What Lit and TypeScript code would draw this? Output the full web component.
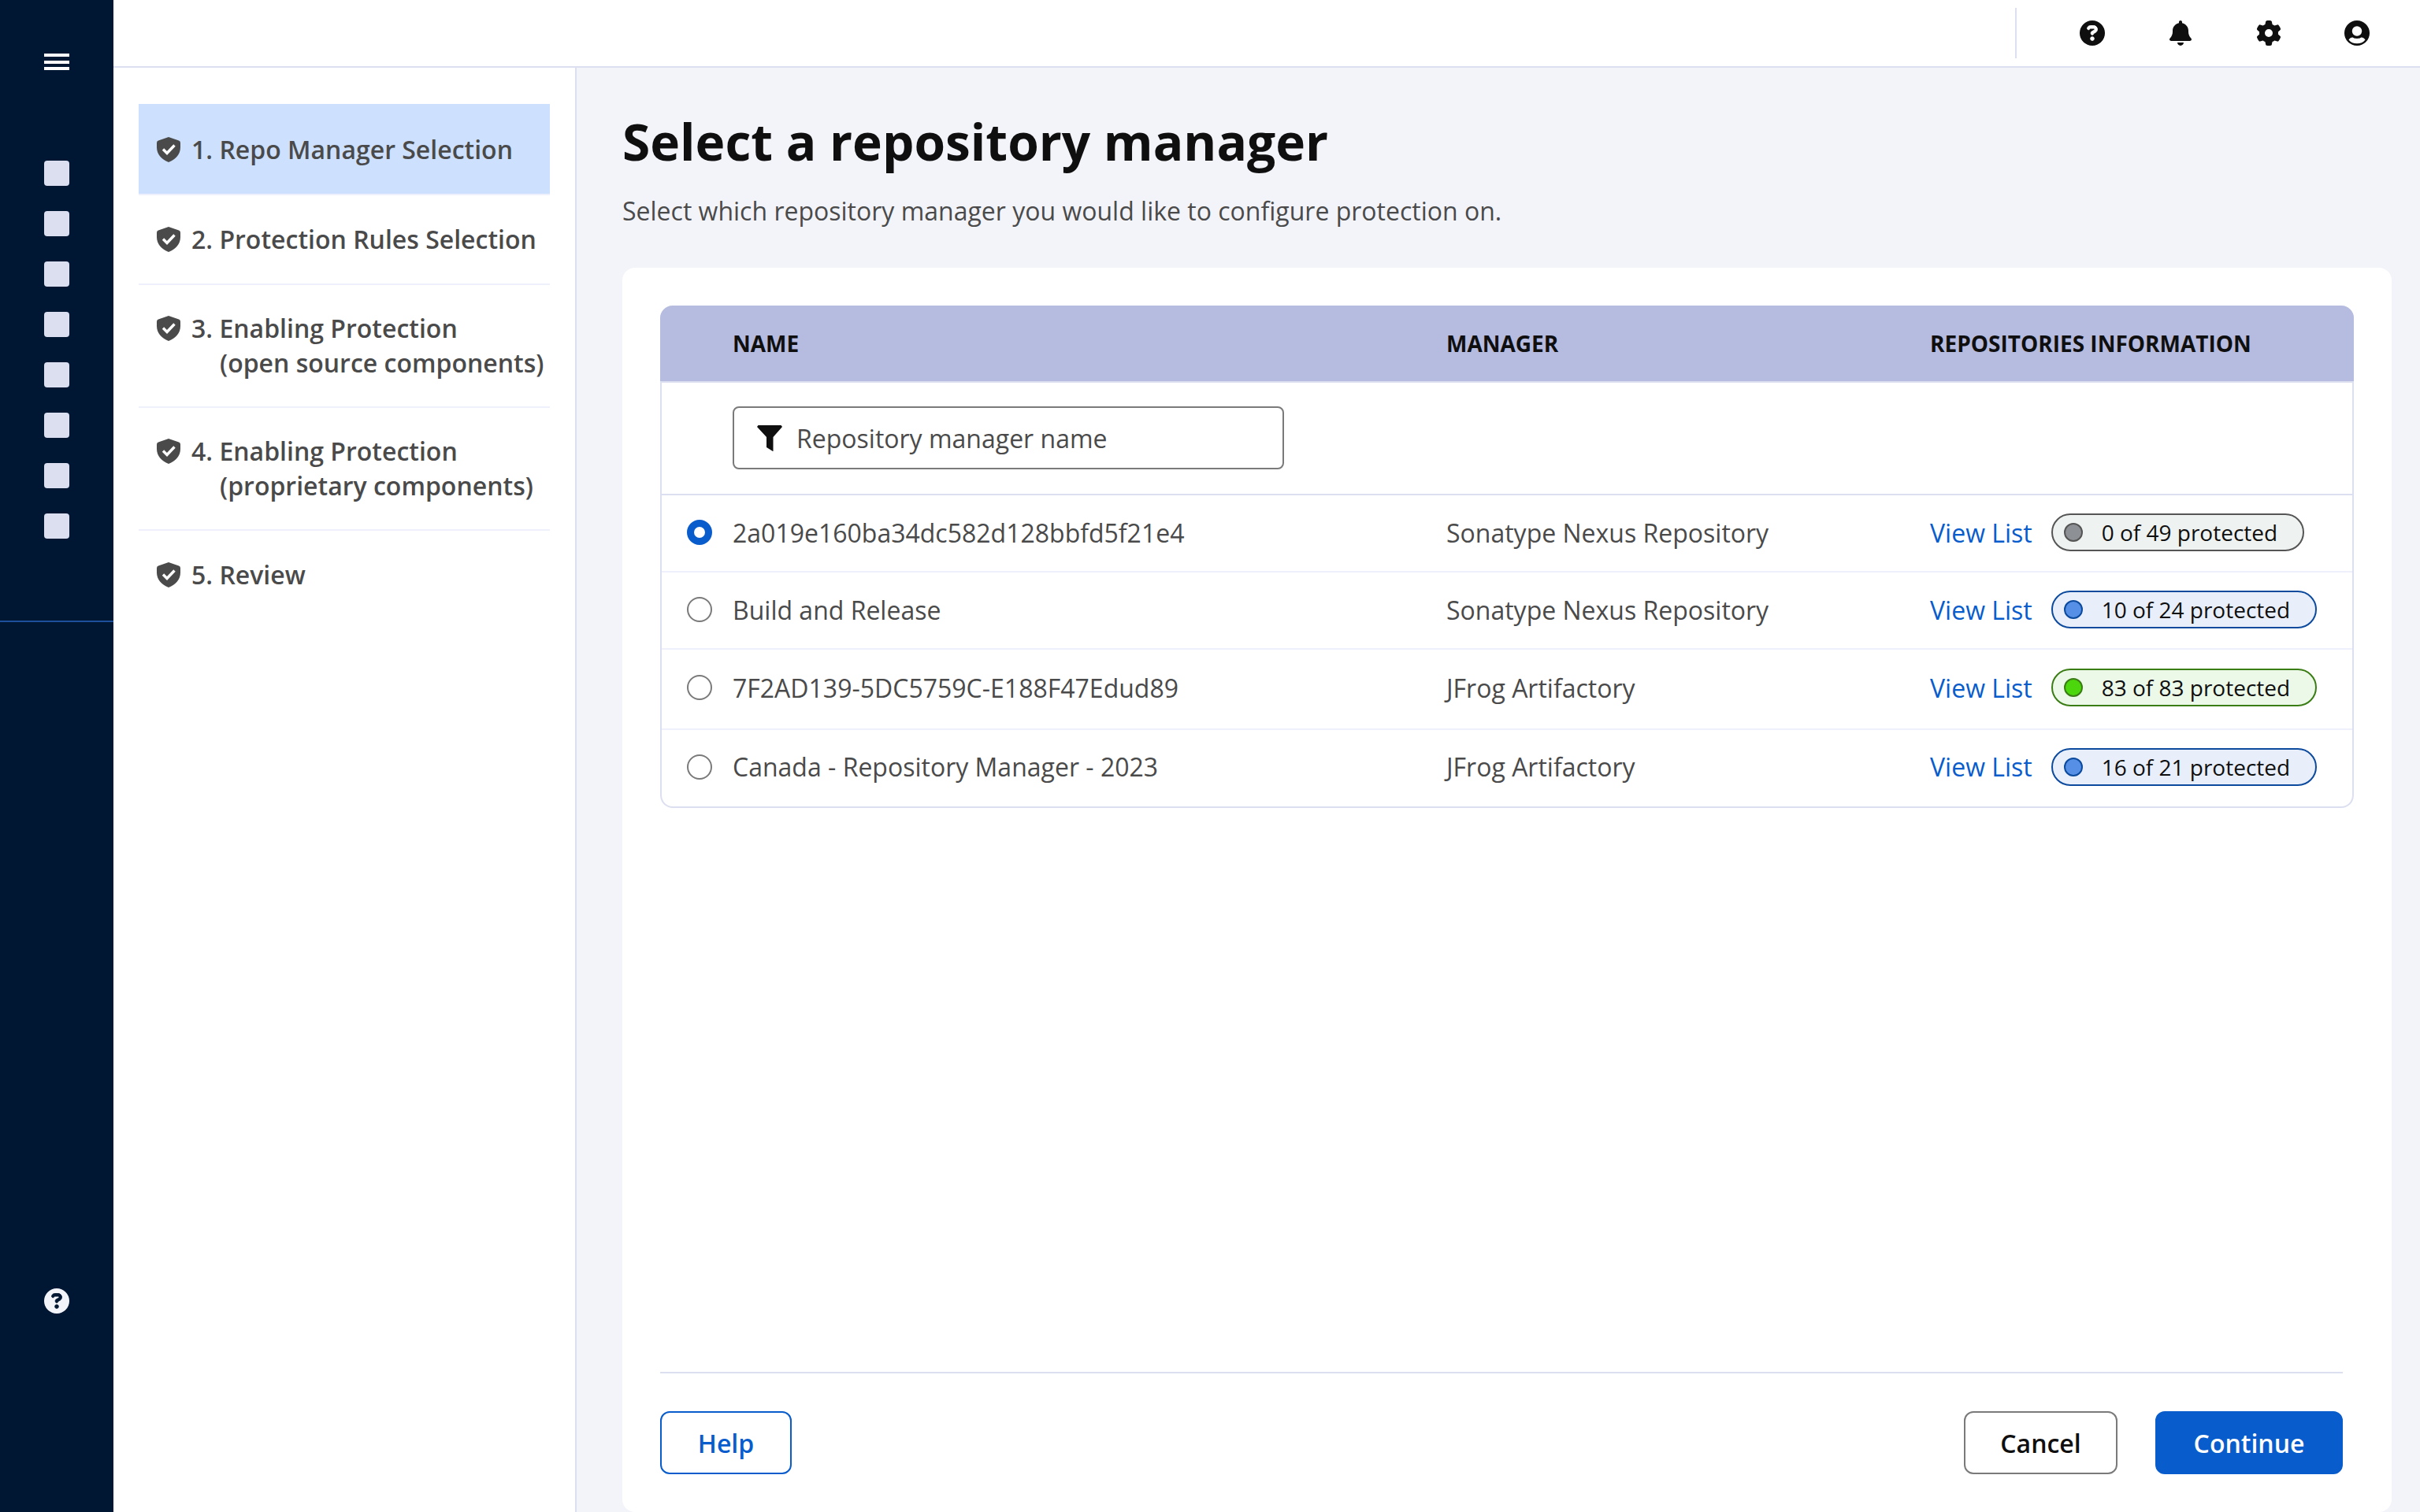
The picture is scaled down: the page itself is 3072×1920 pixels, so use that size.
import { css, html, LitElement, svg } from "lit";
import { customElement, state } from "lit/decorators.js";
import { classMap } from "lit/directives/class-map.js";

const helpIcon = html`<svg class="icon" viewBox="0 0 512 512">
  <circle cx="256" cy="256" r="256" fill="currentColor" />
  <g class="mark" transform="translate(256 256) scale(1.18) translate(-256 -256)">
    <path
      d="M169.8 165.3c7.9-22.3 29.1-37.3 52.8-37.3h58.3c34.9 0 63.1 28.3 63.1 63.1c0 22.6-12.1 43.5-31.7 54.8L280 264.4c-.2 13-10.9 23.6-24 23.6c-13.3 0-24-10.7-24-24V250.5c0-8.6 4.6-16.5 12.1-20.8l44.3-25.4c4.7-2.7 7.6-7.7 7.6-13.1c0-8.4-6.8-15.1-15.1-15.100H222.600c-3.400 0-6.400 2.100-7.500 5.300l-.4 1.200c-4.400 12.500-18.200 19-30.600 14.600s-19-18.200-14.600-30.600l.4-1.200zM224 352a32 32 0 1 1 64 0 32 32 0 1 1 -64 0z"
    />
  </g>
</svg>`;

const bellIcon = html`<svg class="icon" viewBox="0 0 448 512">
  <path
    fill="currentColor"
    d="M224 0c-17.7 0-32 14.3-32 32V51.2C119 66 64 130.6 64 208v18.8c0 47-17.3 92.4-48.5 127.6l-7.4 8.3c-8.4 9.4-10.4 22.9-5.3 34.4S19.4 416 32 416H416c12.6 0 24-7.4 29.2-18.9s3.1-25-5.3-34.4l-7.4-8.3C401.3 319.2 384 273.9 384 226.8V208c0-77.4-55-142-128-156.8V32c0-17.7-14.3-32-32-32zm64 448H160c0 17 6.7 33.3 18.7 45.3s28.3 18.7 45.3 18.7s33.3-6.7 45.3-18.7s18.7-28.3 18.7-45.3z"
  />
</svg>`;

const gearIcon = html`<svg class="icon" viewBox="0 0 512 512">
  <path
    fill="currentColor"
    d="M495.9 166.6c3.2 8.7 .5 18.4-6.4 24.6l-43.3 39.4c1.1 8.3 1.7 16.8 1.7 25.4s-.6 17.1-1.7 25.4l43.3 39.4c6.9 6.2 9.6 15.9 6.4 24.6c-4.4 11.9-9.7 23.3-15.8 34.3l-4.7 8.1c-6.6 11-14 21.4-22.1 31.2c-5.9 7.2-15.7 9.6-24.5 6.8l-55.7-17.7c-13.4 10.3-28.2 18.9-44 25.4l-12.5 57.1c-2 9.1-9 16.3-18.2 17.8c-13.8 2.3-28 3.5-42.5 3.5s-28.7-1.2-42.5-3.5c-9.2-1.5-16.2-8.7-18.2-17.8l-12.5-57.1c-15.8-6.5-30.6-15.1-44-25.4L83.1 425.9c-8.8 2.8-18.6 .3-24.5-6.8c-8.1-9.8-15.5-20.2-22.1-31.2l-4.7-8.1c-6.1-11-11.4-22.4-15.8-34.3c-3.2-8.7-.5-18.4 6.4-24.6l43.3-39.4C64.6 273.1 64 264.6 64 256s.6-17.1 1.7-25.4L22.4 191.2c-6.9-6.2-9.6-15.9-6.4-24.6c4.4-11.9 9.7-23.3 15.8-34.3l4.7-8.1c6.6-11 14-21.4 22.1-31.2c5.9-7.2 15.7-9.6 24.5-6.8l55.7 17.7c13.4-10.3 28.2-18.9 44-25.4l12.5-57.1c2-9.1 9-16.3 18.2-17.8C227.3 1.2 241.5 0 256 0s28.7 1.2 42.5 3.5c9.2 1.5 16.2 8.7 18.2 17.8l12.5 57.1c15.8 6.5 30.6 15.1 44 25.4l55.7-17.7c8.8-2.8 18.6-.3 24.5 6.8c8.1 9.8 15.5 20.2 22.1 31.2l4.7 8.1c6.1 11 11.4 22.4 15.8 34.3zM256 336a80 80 0 1 0 0-160 80 80 0 1 0 0 160z"
  />
</svg>`;

const userIcon = html`<svg class="icon" viewBox="0 0 32 32">
  <circle cx="16" cy="16" r="16" fill="currentColor" />
  <circle cx="16" cy="13.500" r="6.200" fill="#fff" />
  <path
    d="M5.500 24.500C7 22.500 9 21.300 11 21.700C13 23.300 19 23.300 21 21.700C23 21.300 25 22.500 26.500 24.500C24 27.800 20.200 29.300 16 29.300S8 27.800 5.500 24.500z"
    fill="#fff"
  />
</svg>`;

const filterIcon = html`<svg class="filter" viewBox="0 0 32 33">
  <path fill="currentColor" d="M1.500 0H30.500L32 2L20.500 15V33H20L12 28V15L0 2z" />
</svg>`;

const shieldIcon = html`<svg class="shield" viewBox="0 0 30 32">
  <path fill="#4a4a4a" d="M15 0 L28 4.500 Q30 5.200 30 7.200 V13 C30 22 24 28.500 15 32 C6 28.500 0 22 0 13 V7.200 Q0 5.200 2 4.500 Z" />
  ${svg`<path fill="none" stroke="#fff" stroke-width="3.400" d="M8 15.500 L13 20.500 L22.500 10.500" />`}
</svg>`;

const steps = [
  ["1. Repo Manager Selection"],
  ["2. Protection Rules Selection"],
  ["3. Enabling Protection", "(open source components)"],
  ["4. Enabling Protection", "(proprietary components)"],
  ["5. Review"],
];

const managers = [
  { name: "2a019e160ba34dc582d128bbfd5f21e4", type: "Sonatype Nexus Repository", text: "0 of 49 protected", tone: "none" },
  { name: "Build and Release", type: "Sonatype Nexus Repository", text: "10 of 24 protected", tone: "some" },
  { name: "7F2AD139-5DC5759C-E188F47Edud89", type: "JFrog Artifactory", text: "83 of 83 protected", tone: "all" },
  { name: "Canada - Repository Manager - 2023", type: "JFrog Artifactory", text: "16 of 21 protected", tone: "some" },
];

@customElement("app-root")
export class AppRoot extends LitElement {
  @state() selected = 0;

  render() {
    return html`
      <aside class="rail">
        <div class="menu"><span></span><span></span><span></span></div>
        <div class="rail-items">${Array.from({ length: 8 }, () => html`<div class="square"></div>`)}</div>
        <div class="rail-line"></div>
        <div class="rail-help">${helpIcon}</div>
      </aside>
      <header class="top">
        <div class="top-icons">${helpIcon}${bellIcon}${gearIcon}${userIcon}</div>
      </header>
      <nav class="steps">
        ${steps.map(
          ([first, second], i) => html`<div class=${classMap({ step: true, active: i === 0 })}>
            ${shieldIcon}
            <div class="step-text">
              <div>${first}</div>
              ${second ? html`<div class="step-sub">${second}</div>` : ""}
            </div>
          </div>`
        )}
      </nav>
      <main class="main">
        <h1>Select a repository manager</h1>
        <p class="lead">Select which repository manager you would like to configure protection on.</p>
        <section class="card">
          <div class="table">
            <div class="row head">
              <div>NAME</div>
              <div>MANAGER</div>
              <div>REPOSITORIES INFORMATION</div>
            </div>
            <div class="filter-row">
              <div class="input">${filterIcon}<span>Repository manager name</span></div>
            </div>
            ${managers.map(
              (m, i) => html`<div class="row item" @click=${() => (this.selected = i)}>
                <span class=${classMap({ radio: true, on: this.selected === i })}></span>
                <div>${m.name}</div>
                <div>${m.type}</div>
                <div class="info">
                  <a class="link">View List</a>
                  <span class="pill ${m.tone}"><i></i>${m.text}</span>
                </div>
              </div>`
            )}
          </div>
          <div class="footer">
            <button class="btn help">Help</button>
            <div class="right">
              <button class="btn cancel">Cancel</button>
              <button class="btn go">Continue</button>
            </div>
          </div>
        </section>
      </main>
    `;
  }

  static styles = css`
    :host {
      display: grid;
      grid-template-columns: 144px 588px 1fr;
      grid-template-rows: 86px 1fr;
      height: 1920px;
      overflow: hidden;
      background: #f3f4fa;
      color: #4a4a4a;
      font-family: "Open Sans", sans-serif;
      font-size: 32px;
    }
    .icon {
      display: block;
      width: 32px;
      height: 32px;
    }
    .mark {
      fill: #fff;
      stroke: #fff;
      stroke-width: 12;
    }
    .rail {
      grid-row: 1 / 3;
      background: #001733;
      display: flex;
      flex-direction: column;
      color: #dcdff0;
    }
    .menu {
      display: flex;
      flex-direction: column;
      gap: 4.5px;
      margin: 68px 56px 0;
      height: 20px;
    }
    .menu span {
      flex: none;
      height: 4px;
      background: #fff;
    }
    .rail-items {
      display: flex;
      flex-direction: column;
      gap: 32px;
      margin: 116px 56px 0;
    }
    .square {
      height: 32px;
      border-radius: 4px;
      background: #dcdff0;
    }
    .rail-line {
      height: 2px;
      background: #1c4f9c;
      margin-top: 104px;
    }
    .rail-help {
      margin: 846px 56px 0;
      color: #f3f4fa;
    }
    .rail-help .mark {
      fill: #001733;
      stroke: #001733;
    }
    .top {
      grid-column: 2 / 4;
      background: #fff;
      border-bottom: 2px solid #dcdff0;
      box-sizing: border-box;
      display: flex;
      justify-content: flex-end;
      align-items: flex-start;
      padding: 10px 64px 0 0;
    }
    .top-icons {
      height: 64px;
      display: flex;
      align-items: center;
      gap: 80px;
      border-left: 2px solid #dcdff0;
      padding-left: 80px;
      color: #0f0f0f;
    }
    .top-icons svg:nth-child(2) {
      margin: 0 2px;
      width: 28px;
    }
    .steps {
      background: #fff;
      border-right: 2px solid #dcdff0;
      padding: 46px 32px 0;
    }
    .step {
      display: flex;
      gap: 14px;
      align-items: flex-start;
      padding: 33px 0 33px 23px;
      border-bottom: 2px solid #eef1fc;
      line-height: 44px;
      font-size: 32px;
      font-weight: 600;
      white-space: nowrap;
    }
    .step:nth-child(2) {
      padding-top: 34px;
      padding-bottom: 34px;
    }
    .step:last-child {
      border-bottom: none;
      padding-top: 34px;
    }
    .step.active {
      background: #cde1fe;
      padding-top: 36px;
      padding-bottom: 34px;
    }
    .step-sub {
      margin-left: 36px;
    }
    .shield {
      width: 30px;
      height: 32px;
      flex: none;
      margin-top: 6px;
    }
    .main {
      padding: 0 36px 0 58px;
      display: flex;
      flex-direction: column;
      min-height: 0;
    }
    h1 {
      margin: 52px 0 0;
      color: #0f0f0f;
      font-size: 64px;
      line-height: 84px;
      font-weight: 700;
    }
    .lead {
      margin: 24px 0 0;
      line-height: 44px;
    }
    .card {
      margin-top: 50px;
      flex: 1;
      background: #fff;
      border-radius: 16px;
      padding: 48px 62px 48px 48px;
      box-sizing: border-box;
      display: flex;
      flex-direction: column;
    }
    .table {
      margin-right: -14px;
      border: 2px solid #dcdff0;
      border-top: none;
      border-radius: 16px;
    }
    .row {
      display: grid;
      align-items: center;
    }
    .head {
      grid-template-columns: 92px 906px 614px 1fr;
      height: 98px;
      margin: 0 -2px;
      box-sizing: border-box;
      border-bottom: 2px solid #dcdff0;
      background: #b6bbe0;
      border-radius: 16px 16px 0 0;
      color: #0f0f0f;
      font-weight: 700;
      font-size: 28px;
    }
    .head div:first-child {
      grid-column: 2;
    }
    .filter-row {
      height: 143px;
      box-sizing: border-box;
      border-bottom: 2px solid #dcdff0;
      padding: 30px 0 0 90px;
    }
    .input {
      width: 700px;
      height: 80px;
      box-sizing: border-box;
      border: 2px solid #7a7a7a;
      border-radius: 8px;
      display: flex;
      align-items: center;
      gap: 18px;
      padding-left: 29px;
    }
    .filter {
      width: 32px;
      height: 33px;
      color: #0f0f0f;
    }
    .item {
      grid-template-columns: 90px 906px 614px 1fr;
      height: 98px;
      padding-bottom: 2px;
      box-sizing: border-box;
      border-bottom: 2px solid #eef1fc;
    }
    .item:nth-child(5) {
      height: 102px;
      padding-bottom: 4px;
    }
    .item:last-child {
      height: 97px;
      border-bottom: none;
      padding-bottom: 4px;
    }
    .radio {
      justify-self: start;
      margin-left: 32px;
      width: 32px;
      height: 32px;
      box-sizing: border-box;
      border: 2px solid #7a7a7a;
      border-radius: 50%;
    }
    .radio.on {
      border: 9px solid #085ccc;
    }
    .info {
      display: flex;
      align-items: center;
      gap: 24px;
    }
    .link {
      color: #085ccc;
    }
    .pill {
      display: flex;
      align-items: center;
      gap: 24px;
      height: 48px;
      box-sizing: border-box;
      padding: 0 32px 0 14px;
      border: 2px solid;
      border-radius: 24px;
      color: #0f0f0f;
      font-size: 28px;
    }
    .pill i {
      width: 24px;
      height: 24px;
      box-sizing: border-box;
      border: 2px solid;
      border-radius: 50%;
    }
    .pill.none {
      background: #eef2f0;
      border-color: #555;
    }
    .pill.none i {
      background: #8d9094;
      border-color: #555;
    }
    .pill.some {
      background: #e8effb;
      border-color: #0c4a9e;
    }
    .pill.some i {
      background: #5590e6;
      border-color: #0c4a9e;
    }
    .pill.all {
      background: #ecf8e8;
      border-color: #3a7d14;
    }
    .pill.all i {
      background: #4cd60c;
      border-color: #3a7d14;
    }
    .footer {
      margin-top: auto;
      border-top: 2px solid #dcdff0;
      padding-top: 48px;
      display: flex;
      justify-content: space-between;
    }
    .right {
      display: flex;
      gap: 48px;
    }
    .btn {
      height: 80px;
      box-sizing: border-box;
      border-radius: 12px;
      border: 2px solid #7a7a7a;
      background: #fff;
      color: #0f0f0f;
      font: inherit;
      font-weight: 600;
      padding: 0;
    }
    .btn.help {
      width: 167px;
      border-color: #085ccc;
      color: #085ccc;
    }
    .btn.cancel {
      width: 195px;
    }
    .btn.go {
      width: 238px;
      border-color: #085ccc;
      background: #085ccc;
      color: #fff;
    }
  `;
}
